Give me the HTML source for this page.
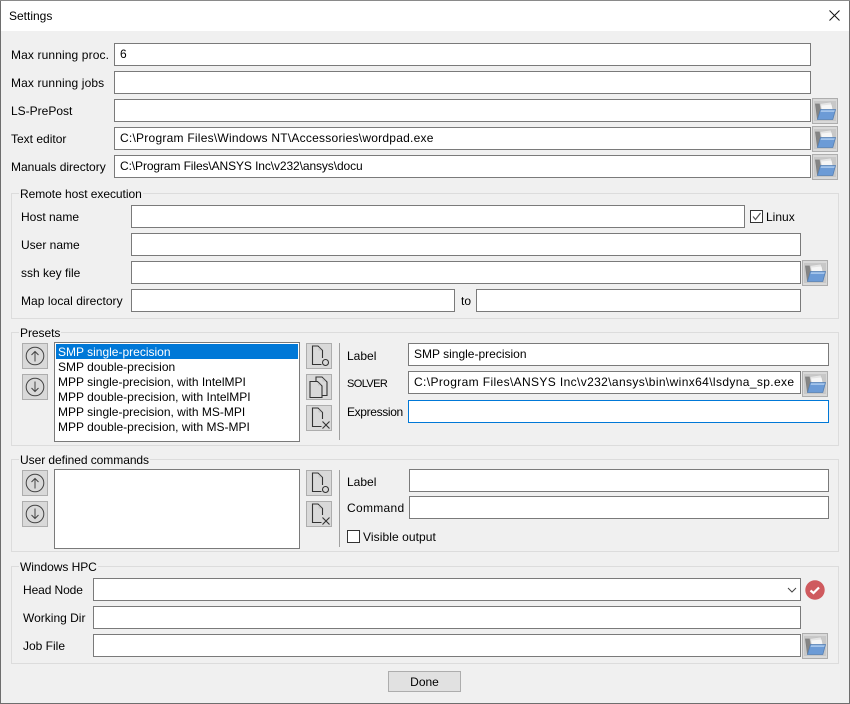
<!DOCTYPE html>
<html><head><meta charset="utf-8"><style>
html,body{margin:0;padding:0;width:850px;height:704px;overflow:hidden;background:#f0f0f0}
body{position:relative;font-family:"Liberation Sans",sans-serif;font-size:12px;color:#000}
.t{position:absolute;white-space:nowrap;line-height:16px;height:16px}
.i{position:absolute;box-sizing:border-box;background:#fff;border:1px solid #7a7a7a;height:23px;line-height:21px;padding-left:5px;white-space:nowrap;overflow:hidden}
.g{position:absolute;box-sizing:border-box;left:11px;width:828px;border:1px solid #dcdcdc}
.l{position:absolute;background:#f0f0f0;padding:0 1px;line-height:14px;height:14px;white-space:nowrap;letter-spacing:-.05px}
.b{position:absolute;box-sizing:border-box;width:26px;height:26px;background:#d9d9d9;border:1px solid #adadad}
.b svg{position:absolute;left:0;top:0}
.c{position:absolute;box-sizing:border-box;width:13px;height:13px;background:#fff;border:1px solid #333}
.s{position:absolute;left:339px;width:1px;background:#a0a0a0}
.r{position:absolute;left:58px;white-space:nowrap;line-height:15px;height:15px}
</style></head><body>
<svg width="0" height="0" style="position:absolute"><defs>
<symbol id="f" viewBox="0 0 24 24"><rect x="1" y="2" width="22" height="20" fill="#c8c8c8"/><path d="M2.500 5h5l1 2v13h-4z" fill="#858585" stroke="#808080" stroke-width=".8"/><path d="M7 4.500l11-1.500 2 7H8z" fill="#e4e4e4" stroke="#c4c4c4" stroke-width=".8"/><path d="M8.500 6.500l10-1 1 5h-11z" fill="#f6f6f6"/><path d="M7.500 10.500H22.500L19.800 20.500H4.500z" fill="#6c9bd6" stroke="#5580b4" stroke-width=".8"/><path d="M8 11.200H21.800L21.300 13H7.500z" fill="#a4c4ea"/></symbol>
<symbol id="u" viewBox="0 0 24 24"><circle cx="12" cy="12" r="8.800" fill="none" stroke="#444" stroke-width="1"/><path d="M12 17.500V7.500M8.500 11l3.500-3.500 3.500 3.500" fill="none" stroke="#444" stroke-width="1"/></symbol>
<symbol id="d" viewBox="0 0 24 24"><circle cx="12" cy="12" r="8.800" fill="none" stroke="#444" stroke-width="1"/><path d="M12 6.500v10M8.500 13l3.500 3.500 3.500-3.500" fill="none" stroke="#444" stroke-width="1"/></symbol>
<symbol id="n" viewBox="0 0 24 24"><path d="M15.500 14V6.500l-4.500-4.500H5.500v18.500h9" fill="none" stroke="#333" stroke-width="1.100"/><path d="M11.500 3v3.500h3.500z" fill="#c8c8c8"/><circle cx="18.500" cy="18.500" r="3" fill="none" stroke="#333" stroke-width="1.100"/></symbol>
<symbol id="k" viewBox="0 0 24 24"><path d="M9 6.500V2h6l5 5v13.500h-4.500" fill="none" stroke="#333" stroke-width="1.100"/><path d="M15.500 3v3.500h3.500z" fill="#c8c8c8"/><path d="M15 11v11.500H3V6.500h7.500L15 11z" fill="none" stroke="#333" stroke-width="1.100"/><path d="M11 7.500v3h3z" fill="#c8c8c8"/></symbol>
<symbol id="x" viewBox="0 0 24 24"><path d="M15.500 13V6.500l-4.500-4.500H5.500v18.500h9" fill="none" stroke="#333" stroke-width="1.100"/><path d="M11.500 3v3.500h3.500z" fill="#c8c8c8"/><path d="M15.500 15.500l7 7M22.500 15.500l-7 7" fill="none" stroke="#333" stroke-width="1.100"/></symbol>
</defs></svg>

<div style="position:absolute;left:0;top:0;width:850px;height:31px;background:#fff"></div>
<div class="t" style="left:9px;top:8px">Settings</div>
<svg style="position:absolute;left:829px;top:10px" width="11" height="11"><path d="M.5.500l10 10M10.500.500l-10 10" stroke="#111" stroke-width="1" fill="none"/></svg>

<div class="t" style="left:11px;top:47px;letter-spacing:.12px">Max running proc.</div>
<div class="i" style="left:114px;top:43px;width:697px">6</div>
<div class="t" style="left:11px;top:75px;letter-spacing:.12px">Max running jobs</div>
<div class="i" style="left:114px;top:71px;width:697px"></div>
<div class="t" style="left:11px;top:103px">LS-PrePost</div>
<div class="i" style="left:114px;top:99px;width:697px"></div>
<div class="b" style="left:812px;top:98px"><svg width="24" height="24"><use href="#f"/></svg></div>
<div class="t" style="left:11px;top:131px">Text editor</div>
<div class="i" style="left:114px;top:127px;width:697px;letter-spacing:.24px">C:\Program Files\Windows NT\Accessories\wordpad.exe</div>
<div class="b" style="left:812px;top:126px"><svg width="24" height="24"><use href="#f"/></svg></div>
<div class="t" style="left:11px;top:159px">Manuals directory</div>
<div class="i" style="left:114px;top:155px;width:697px;letter-spacing:-.1px">C:\Program Files\ANSYS Inc\v232\ansys\docu</div>
<div class="b" style="left:812px;top:154px"><svg width="24" height="24"><use href="#f"/></svg></div>

<div class="g" style="top:193px;height:126px"></div>
<div class="l" style="left:19px;top:187px">Remote host execution</div>
<div class="t" style="left:21px;top:209px">Host name</div>
<div class="i" style="left:131px;top:205px;width:614px"></div>
<div class="c" style="left:750px;top:210px"><svg width="11" height="11" style="position:absolute;left:0;top:0"><path d="M2 5.500l2.500 3L9.500 2" stroke="#555" stroke-width="1.200" fill="none"/></svg></div>
<div class="t" style="left:766px;top:209px">Linux</div>
<div class="t" style="left:21px;top:237px">User name</div>
<div class="i" style="left:131px;top:233px;width:670px"></div>
<div class="t" style="left:21px;top:265px">ssh key file</div>
<div class="i" style="left:131px;top:261px;width:670px"></div>
<div class="b" style="left:802px;top:260px"><svg width="24" height="24"><use href="#f"/></svg></div>
<div class="t" style="left:21px;top:293px;letter-spacing:.05px">Map local directory</div>
<div class="i" style="left:131px;top:289px;width:324px"></div>
<div class="t" style="left:461px;top:293px">to</div>
<div class="i" style="left:476px;top:289px;width:325px"></div>

<div class="g" style="top:332px;height:114px"></div>
<div class="l" style="left:19px;top:326px">Presets</div>
<div class="b" style="left:22px;top:343px"><svg width="24" height="24"><use href="#u"/></svg></div>
<div class="b" style="left:22px;top:374px"><svg width="24" height="24"><use href="#d"/></svg></div>
<div class="i" style="left:54px;top:342px;width:246px;height:100px;padding:0"></div>
<div style="position:absolute;left:56px;top:344px;width:242px;height:15px;background:#0078d7"></div>
<div class="r" style="top:345px;color:#fff">SMP single-precision</div>
<div class="r" style="top:360px">SMP double-precision</div>
<div class="r" style="top:375px">MPP single-precision, with IntelMPI</div>
<div class="r" style="top:390px">MPP double-precision, with IntelMPI</div>
<div class="r" style="top:405px">MPP single-precision, with MS-MPI</div>
<div class="r" style="top:420px">MPP double-precision, with MS-MPI</div>
<div class="b" style="left:306px;top:343px"><svg width="24" height="24"><use href="#n"/></svg></div>
<div class="b" style="left:306px;top:374px"><svg width="24" height="24"><use href="#k"/></svg></div>
<div class="b" style="left:306px;top:405px"><svg width="24" height="24"><use href="#x"/></svg></div>
<div class="s" style="top:343px;height:97px"></div>
<div class="t" style="left:347px;top:348px">Label</div>
<div class="i" style="left:408px;top:343px;width:421px">SMP single-precision</div>
<div class="t" style="left:347px;top:376px;font-size:11px;letter-spacing:-.6px">SOLVER</div>
<div class="i" style="left:408px;top:371px;width:393px;letter-spacing:.37px">C:\Program Files\ANSYS Inc\v232\ansys\bin\winx64\lsdyna_sp.exe</div>
<div class="b" style="left:802px;top:371px"><svg width="24" height="24"><use href="#f"/></svg></div>
<div class="t" style="left:347px;top:404px;letter-spacing:-.35px">Expression</div>
<div class="i" style="left:408px;top:400px;width:421px;border-color:#0078d7"></div>

<div class="g" style="top:459px;height:93px"></div>
<div class="l" style="left:19px;top:453px">User defined commands</div>
<div class="b" style="left:22px;top:470px"><svg width="24" height="24"><use href="#u"/></svg></div>
<div class="b" style="left:22px;top:501px"><svg width="24" height="24"><use href="#d"/></svg></div>
<div class="i" style="left:54px;top:469px;width:246px;height:80px;padding:0"></div>
<div class="b" style="left:306px;top:470px"><svg width="24" height="24"><use href="#n"/></svg></div>
<div class="b" style="left:306px;top:501px"><svg width="24" height="24"><use href="#x"/></svg></div>
<div class="s" style="top:470px;height:77px"></div>
<div class="t" style="left:347px;top:474px">Label</div>
<div class="i" style="left:409px;top:469px;width:420px"></div>
<div class="t" style="left:347px;top:500px;letter-spacing:.3px">Command</div>
<div class="i" style="left:409px;top:496px;width:420px"></div>
<div class="c" style="left:347px;top:530px"></div>
<div class="t" style="left:363px;top:529px;letter-spacing:.08px">Visible output</div>

<div class="g" style="top:566px;height:98px"></div>
<div class="l" style="left:19px;top:560px">Windows HPC</div>
<div class="t" style="left:23px;top:582px;letter-spacing:-.1px">Head Node</div>
<div class="i" style="left:93px;top:578px;width:708px"></div>
<svg style="position:absolute;left:787px;top:587px" width="10" height="6"><path d="M1 1l4 4 4-4" stroke="#444" fill="none"/></svg>
<svg style="position:absolute;left:805px;top:580px" width="20" height="20"><circle cx="10" cy="10" r="9.700" fill="#cf5a5e"/><path d="M5.500 10.500l3 2.500 5.500-5.500" stroke="#fff" stroke-width="2.200" fill="none"/></svg>
<div class="t" style="left:23px;top:610px">Working Dir</div>
<div class="i" style="left:93px;top:606px;width:708px"></div>
<div class="t" style="left:23px;top:638px">Job File</div>
<div class="i" style="left:93px;top:634px;width:708px"></div>
<div class="b" style="left:802px;top:633px"><svg width="24" height="24"><use href="#f"/></svg></div>

<div style="position:absolute;box-sizing:border-box;left:388px;top:671px;width:73px;height:21px;background:#e1e1e1;border:1px solid #adadad;text-align:center;line-height:21px">Done</div>

<div style="position:absolute;left:0;top:0;width:1px;height:704px;background:#6e6e6e"></div>
<div style="position:absolute;left:849px;top:0;width:1px;height:704px;background:#6e6e6e"></div>
<div style="position:absolute;left:0;top:0;width:850px;height:1px;background:#8a8a8a"></div>
<div style="position:absolute;left:0;top:703px;width:850px;height:1px;background:#6e6e6e"></div>
</body></html>
